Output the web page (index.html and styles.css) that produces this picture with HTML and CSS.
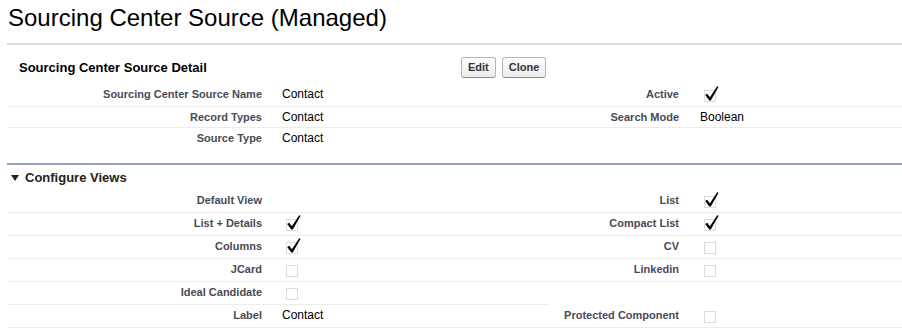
FILE: index.html
```html
<!DOCTYPE html>
<html>
<head>
<meta charset="utf-8">
<link rel="stylesheet" href="styles.css">
</head>
<body>
<div class="page">
  <h1 class="page-title">Sourcing Center Source (Managed)</h1>
  <div class="block">
    <div class="block-header">
      <h2 class="block-title">Sourcing Center Source Detail</h2>
      <div class="buttons">
        <button class="btn">Edit</button>
        <button class="btn">Clone</button>
      </div>
    </div>
    <div class="detail-grid">
      <div class="lbl">Sourcing Center Source Name</div>
      <div class="val">Contact</div>
      <div class="lbl">Active</div>
      <div class="val"><svg class="cb" width="21" height="16" viewBox="0 0 21 16"><rect x="4.5" y="3.5" width="11" height="11" fill="none" stroke="#b8b8b8" stroke-dasharray="1 1"/><path d="M5.2 8 L7.2 6.8 L9.9 10.2 L17.2 -0.8 L18.6 -0.2 L10.8 13.6 L9.3 13.6 Z" fill="#000"/></svg></div>

      <div class="lbl">Record Types</div>
      <div class="val">Contact</div>
      <div class="lbl">Search Mode</div>
      <div class="val">Boolean</div>

      <div class="lbl nb">Source Type</div>
      <div class="val nb">Contact</div>
      <div class="lbl nb"></div>
      <div class="val nb"></div>
    </div>
  </div>

  <div class="section">
    <div class="section-header">
      <span class="tri"></span>
      <h3 class="section-title">Configure Views</h3>
    </div>
    <div class="detail-grid">
      <div class="lbl">Default View</div>
      <div class="val"></div>
      <div class="lbl">List</div>
      <div class="val"><svg class="cb" width="21" height="16" viewBox="0 0 21 16"><rect x="4.5" y="3.5" width="11" height="11" fill="none" stroke="#b8b8b8" stroke-dasharray="1 1"/><path d="M5.2 8 L7.2 6.8 L9.9 10.2 L17.2 -0.8 L18.6 -0.2 L10.8 13.6 L9.3 13.6 Z" fill="#000"/></svg></div>

      <div class="lbl">List + Details</div>
      <div class="val"><svg class="cb" width="21" height="16" viewBox="0 0 21 16"><rect x="4.5" y="3.5" width="11" height="11" fill="none" stroke="#b8b8b8" stroke-dasharray="1 1"/><path d="M5.2 8 L7.2 6.8 L9.9 10.2 L17.2 -0.8 L18.6 -0.2 L10.8 13.6 L9.3 13.6 Z" fill="#000"/></svg></div>
      <div class="lbl">Compact List</div>
      <div class="val"><svg class="cb" width="21" height="16" viewBox="0 0 21 16"><rect x="4.5" y="3.5" width="11" height="11" fill="none" stroke="#b8b8b8" stroke-dasharray="1 1"/><path d="M5.2 8 L7.2 6.8 L9.9 10.2 L17.2 -0.8 L18.6 -0.2 L10.8 13.6 L9.3 13.6 Z" fill="#000"/></svg></div>

      <div class="lbl">Columns</div>
      <div class="val"><svg class="cb" width="21" height="16" viewBox="0 0 21 16"><rect x="4.5" y="3.5" width="11" height="11" fill="none" stroke="#b8b8b8" stroke-dasharray="1 1"/><path d="M5.2 8 L7.2 6.8 L9.9 10.2 L17.2 -0.8 L18.6 -0.2 L10.8 13.6 L9.3 13.6 Z" fill="#000"/></svg></div>
      <div class="lbl">CV</div>
      <div class="val"><svg class="cb" width="21" height="16" viewBox="0 0 21 16"><rect x="4.5" y="3.5" width="11" height="11" fill="none" stroke="#b8b8b8" stroke-dasharray="1 1"/></svg></div>

      <div class="lbl">JCard</div>
      <div class="val"><svg class="cb" width="21" height="16" viewBox="0 0 21 16"><rect x="4.5" y="3.5" width="11" height="11" fill="none" stroke="#b8b8b8" stroke-dasharray="1 1"/></svg></div>
      <div class="lbl">Linkedin</div>
      <div class="val"><svg class="cb" width="21" height="16" viewBox="0 0 21 16"><rect x="4.5" y="3.5" width="11" height="11" fill="none" stroke="#b8b8b8" stroke-dasharray="1 1"/></svg></div>

      <div class="lbl">Ideal Candidate</div>
      <div class="val"><svg class="cb" width="21" height="16" viewBox="0 0 21 16"><rect x="4.5" y="3.5" width="11" height="11" fill="none" stroke="#b8b8b8" stroke-dasharray="1 1"/></svg></div>
      <div class="lbl nb"></div>
      <div class="val nb"></div>

      <div class="lbl">Label</div>
      <div class="val">Contact</div>
      <div class="lbl">Protected Component</div>
      <div class="val"><svg class="cb" width="21" height="16" viewBox="0 0 21 16"><rect x="4.5" y="3.5" width="11" height="11" fill="none" stroke="#b8b8b8" stroke-dasharray="1 1"/></svg></div>
    </div>
  </div>
</div>
</body>
</html>
```

FILE: styles.css
```css
html, body {
  margin: 0;
  padding: 0;
  background: #fff;
  overflow: hidden;
}

body {
  font-family: "Liberation Sans", Arial, sans-serif;
  color: #000;
}

.page {
  padding-left: 7px;
}

.page-title {
  margin: 0 0 11px 1px;
  padding-top: 4px;
  font-size: 24px;
  line-height: 28px;
  font-weight: normal;
  color: #000;
}

.block {
  border-top: 2px solid #dcdcdc;
}

.block-header {
  display: flex;
  align-items: center;
  height: 33px;
  padding-top: 6px;
}

.block-title {
  margin: 0;
  width: 442px;
  padding-left: 12px;
  font-size: 13px;
  font-weight: bold;
  line-height: 16px;
}

.buttons {
  display: flex;
  gap: 6px;
}

.btn {
  font-family: "Liberation Sans", Arial, sans-serif;
  font-size: 11px;
  font-weight: bold;
  line-height: 13px;
  color: #333;
  padding: 3px 6px;
  border: 1px solid #b5b5b5;
  border-bottom-color: #8f8f8f;
  border-radius: 3px;
  background: linear-gradient(#fdfdfd, #ececec);
  margin: 0;
}

.detail-grid {
  display: grid;
  grid-template-columns: 265px 277px 140px 1fr;
}

.lbl, .val {
  padding-top: 3px;
  padding-bottom: 3px;
  line-height: 14px;
  border-bottom: 1px solid #ececec;
  min-height: 14px;
}

.lbl {
  text-align: right;
  padding-right: 10px;
  font-size: 11px;
  font-weight: bold;
  color: #4a4a56;
}

.val {
  padding-left: 10px;
  font-size: 12px;
  color: #000;
}

.val:nth-child(4n) {
  padding-left: 11px;
}

.nb {
  border-bottom-color: transparent;
}

.cb {
  display: block;
  overflow: visible;
}

.section {
  margin-top: 14px;
  border-top: 2px solid #95a2c1;
}

.section-header {
  display: flex;
  align-items: center;
  height: 25px;
  padding-left: 4px;
  gap: 6px;
}

.tri {
  width: 0;
  height: 0;
  border-left: 4px solid transparent;
  border-right: 4px solid transparent;
  border-top: 6px solid #222;
}

.section-title {
  margin: 0;
  font-size: 13px;
  font-weight: bold;
  line-height: 16px;
  color: #222;
}
```
